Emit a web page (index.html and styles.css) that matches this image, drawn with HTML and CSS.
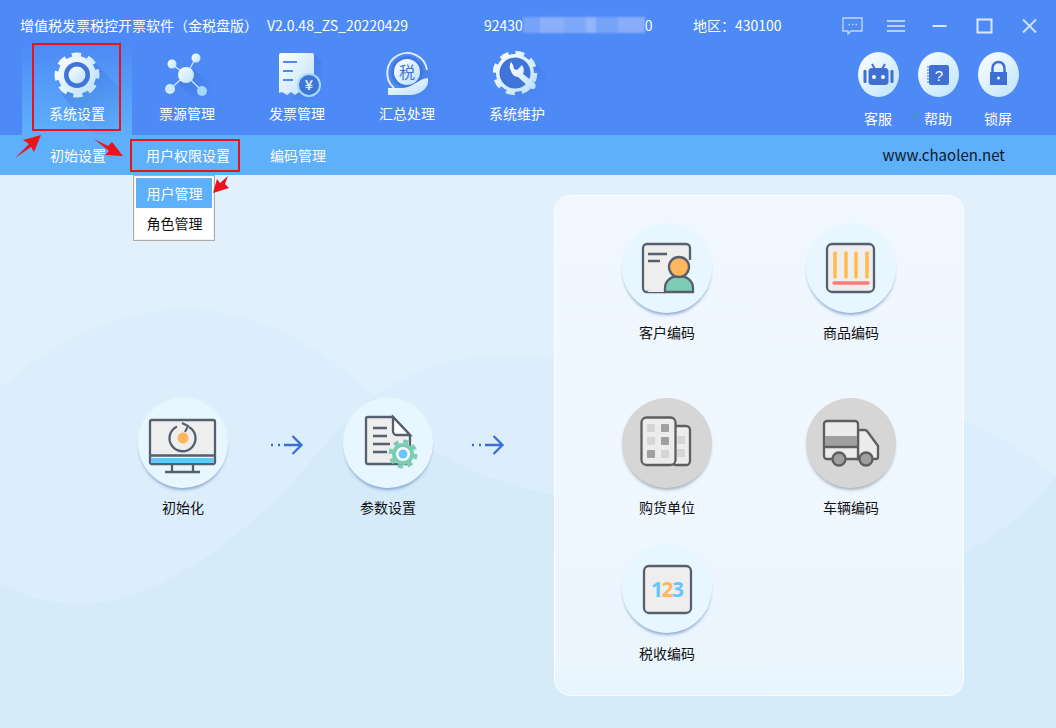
FILE: index.html
```html
<!DOCTYPE html>
<html lang="zh-CN">
<head>
<meta charset="utf-8">
<title>增值税发票税控开票软件</title>
<link rel="stylesheet" href="styles.css">
</head>
<body>
<div class="app">
  <svg class="defs" width="0" height="0">
    <defs>
      <linearGradient id="lt" x1="0" y1="0" x2="1" y2="1">
        <stop offset="0" stop-color="#ffffff"/><stop offset="1" stop-color="#b9e0fd"/>
      </linearGradient>
      <linearGradient id="sh" x1="0" y1="0" x2="1" y2="1">
        <stop offset="0" stop-color="#2f62c8" stop-opacity=".4"/><stop offset="1" stop-color="#2f62c8" stop-opacity="0"/>
      </linearGradient>
    </defs>
  </svg>

  <header class="topbar">
    <div class="titlerow">
      <span class="t-title">增值税发票税控开票软件（金税盘版）</span>
      <span class="t-ver">V2.0.48_ZS_20220429</span>
      <span class="t-id">92430<i class="mosaic"></i>0</span>
      <span class="t-area">地区：430100</span>
      <div class="winctl">
        <svg class="ctl" viewBox="0 0 22 20"><path d="M1.500 2h19v13H9.500l-3 3v-3h-5z" fill="none" stroke="#c3d8fb" stroke-width="1.300"/><path d="M7 8.500h1.500M10.500 8.500H12M14 8.500h1.500" stroke="#c3d8fb" stroke-width="1.500"/></svg>
        <svg class="ctl ctl-menu" viewBox="0 0 22 20"><path d="M2 5h18M2 10h18M2 15h18" stroke="#b9d1fa" stroke-width="1.800"/></svg>
        <svg class="ctl" viewBox="0 0 22 20"><path d="M4 10h14" stroke="#dbe8fd" stroke-width="2"/></svg>
        <svg class="ctl" viewBox="0 0 22 20"><rect x="4" y="3.500" width="14" height="13" fill="none" stroke="#dbe8fd" stroke-width="2"/></svg>
        <svg class="ctl" viewBox="0 0 22 20"><path d="M4.500 3.500l13 13M17.500 3.500l-13 13" stroke="#cfdffc" stroke-width="2"/></svg>
      </div>
    </div>
    <div class="toolrow">
      <nav class="tabs">
        <div class="tab tab-on">
          <svg class="tab-ico" viewBox="52 50 50 50">
            <path d="M90 58L120 88V135H95L62 95z" fill="url(#sh)"/>
            <circle cx="77" cy="75" r="19" fill="url(#lt)"/>
            <circle cx="77" cy="75" r="20" fill="none" stroke="url(#lt)" stroke-width="5" stroke-dasharray="9 6.700" transform="rotate(-16 77 75)"/>
            <circle cx="77" cy="75" r="13" fill="#3f74d8"/>
            <circle cx="77" cy="75" r="8.500" fill="url(#lt)"/>
          </svg>
          <span>系统设置</span>
        </div>
        <div class="tab">
          <svg class="tab-ico" viewBox="162 50 50 50">
            <path d="M192 68L212 84V100H194L178 84z" fill="url(#sh)"/>
            <path d="M186 75L196 58M186 75L172 64M186 75L170 89M186 75L202 91" stroke="#d6ecfd" stroke-width="1.200"/>
            <circle cx="186" cy="75" r="8" fill="url(#lt)"/>
            <circle cx="196" cy="58" r="4.500" fill="url(#lt)"/>
            <circle cx="172" cy="64" r="4.500" fill="url(#lt)"/>
            <circle cx="170" cy="89" r="5" fill="#cde9fe"/>
            <circle cx="202" cy="91" r="5" fill="#a6d8fd"/>
          </svg>
          <span>票源管理</span>
        </div>
        <div class="tab">
          <svg class="tab-ico" viewBox="272 50 50 50">
            <path d="M314 54L322 62V100H292z" fill="url(#sh)"/>
            <path d="M281 53h31a2 2 0 0 1 2 2v38l-3 1-4-2-4 3-4-3-4 3-4-3-4 3-5-3-3 1V55a2 2 0 0 1 2-2z" fill="url(#lt)"/>
            <path d="M283 62h14M283 71h10M283 80h10" stroke="#4e8af6" stroke-width="2"/>
            <circle cx="309" cy="85" r="11" fill="#3f74d8" stroke="#a8d9fd" stroke-width="2"/>
            <text x="309" y="90" class="svg-yen">¥</text>
          </svg>
          <span>发票管理</span>
        </div>
        <div class="tab">
          <svg class="tab-ico" viewBox="382 50 50 50">
            <path d="M420 60L432 72V100H400z" fill="url(#sh)"/>
            <path d="M394 88A20 20 0 1 1 427 70" fill="none" stroke="#e4f3fe" stroke-width="1.800"/>
            <circle cx="407" cy="72" r="16" fill="#3f74d8" opacity=".8"/>
            <circle cx="407" cy="72" r="13" fill="url(#lt)"/>
            <text x="407" y="78" class="svg-tax">税</text>
            <path d="M388 88h12c8 0 10-2 14-4s9-6 14-6v4c0 6-8 13-18 13h-22z" fill="url(#lt)"/>
          </svg>
          <span>汇总处理</span>
        </div>
        <div class="tab">
          <svg class="tab-ico" viewBox="492 50 50 50">
            <path d="M530 58L545 72V100H520L500 84z" fill="url(#sh)"/>
            <circle cx="515" cy="73" r="19" fill="url(#lt)"/>
            <circle cx="515" cy="73" r="20" fill="none" stroke="url(#lt)" stroke-width="4.500" stroke-dasharray="8.700 7"/>
            <circle cx="515" cy="73" r="15.500" fill="#3f74d8"/>
            <path d="M511 62a9 9 0 0 0 0 9 8 8 0 0 0 7 6l12 11c1.500 1.500 4 1.500 5 0s1-3.500-.5-5L523 74a9 9 0 0 0-1-9l-5 5-3-1-1-4z" fill="url(#lt)"/>
          </svg>
          <span>系统维护</span>
        </div>
      </nav>
      <div class="side">
        <div class="sidebtn">
          <div class="egg">
            <svg viewBox="0 0 41 45"><path d="M14 12l3 5M27 12l-3 5" stroke="#3f6fd2" stroke-width="2"/><rect x="10.500" y="16" width="20" height="17" rx="3.500" fill="#3f6fd2"/><rect x="5.500" y="18" width="3" height="13" rx="1" fill="#3f6fd2"/><rect x="32.500" y="18" width="3" height="13" rx="1" fill="#3f6fd2"/><circle cx="16" cy="25" r="2" fill="#fff"/><circle cx="25" cy="25" r="2" fill="#fff"/></svg>
          </div>
          <span>客服</span>
        </div>
        <div class="sidebtn">
          <div class="egg">
            <svg viewBox="0 0 41 45"><rect x="11" y="13" width="20" height="20" rx="2" fill="#3f6fd2"/><path d="M9 15h4M9 18h4M9 21h4M9 24h4M9 27h4M9 30h4" stroke="#3f6fd2" stroke-width="1.200"/><text x="21" y="29" class="svg-q">?</text></svg>
          </div>
          <span>帮助</span>
        </div>
        <div class="sidebtn">
          <div class="egg">
            <svg viewBox="0 0 41 45"><path d="M14.500 20v-4a6 6 0 0 1 12 0v4" fill="none" stroke="#3f6fd2" stroke-width="2.500"/><rect x="12" y="20" width="17" height="13" fill="#3f6fd2"/><circle cx="20.500" cy="26" r="1.500" fill="#fff"/></svg>
          </div>
          <span>锁屏</span>
        </div>
      </div>
    </div>
  </header>

  <div class="subnav">
    <span>初始设置</span>
    <span>用户权限设置</span>
    <span>编码管理</span>
    <span class="site">www.chaolen.net</span>
  </div>

  <main class="content">
    <svg class="waves" viewBox="0 0 1056 553" preserveAspectRatio="none">
      <path d="M0 212C60 163 120 134 186 134C260 134 320 173 375 220C410 195 450 182 489 182C600 182 750 193 860 205C940 225 1000 260 1056 300V553H0z" fill="#dceefb"/>
      <path d="M0 409C30 424 60 429 85 429C170 425 260 347 310 287C335 258 355 238 375 220C395 243 415 260 436 277C470 297 510 311 560 321C680 346 800 408 900 403C970 383 1025 345 1056 300V553H0z" fill="#d5ebfa"/>
    </svg>
    <section class="flow">
      <div class="node">
        <div class="disc">
          <svg viewBox="0 0 90 90">
            <rect x="12" y="22" width="65" height="44" rx="2" fill="#eee" stroke="#555f6e" stroke-width="2.300"/>
            <rect x="13" y="60" width="63" height="5" fill="#66c6ff"/>
            <path d="M12 57.500h65" stroke="#555f6e" stroke-width="2.300"/>
            <path d="M34 67v7M55 67v7M27 74h35" stroke="#555f6e" stroke-width="2.300"/>
            <path d="M51 29a13 13 0 1 1-12-.500" fill="none" stroke="#555f6e" stroke-width="2.300"/>
            <path d="M44 25l6 3-3 6" fill="none" stroke="#555f6e" stroke-width="2"/>
            <circle cx="45" cy="40" r="5.500" fill="#ffb65c"/>
          </svg>
        </div>
        <span class="lbl">初始化</span>
      </div>
      <div class="arrow arrow-a">
        <svg viewBox="0 0 36 22"><path d="M3 11h2M10 11h2M16 11h17M24.500 2l9 9-9 9" fill="none" stroke="#3b6fd6" stroke-width="2.300"/></svg>
      </div>
      <div class="node">
        <div class="disc">
          <svg viewBox="0 0 90 90">
            <path d="M25 19h25l17 18v27a2 2 0 0 1-2 2H25a2 2 0 0 1-2-2V21a2 2 0 0 1 2-2z" fill="#eee" stroke="#555f6e" stroke-width="2.300"/>
            <path d="M50 19l17 18H54a4 4 0 0 1-4-4z" fill="#fff" stroke="#555f6e" stroke-width="2.300"/>
            <path d="M30 30h14M30 38h14M30 46h17M30 54h14" stroke="#555f6e" stroke-width="2.300"/>
            <circle cx="60" cy="56" r="12.500" fill="none" stroke="#7dcdb5" stroke-width="4" stroke-dasharray="5 4.800"/>
            <circle cx="60" cy="56" r="11" fill="#7dcdb5"/>
            <circle cx="60" cy="56" r="7" fill="#fff"/>
            <circle cx="60" cy="56" r="4.500" fill="#66c6ff"/>
          </svg>
        </div>
        <span class="lbl">参数设置</span>
      </div>
      <div class="arrow arrow-b">
        <svg viewBox="0 0 36 22"><path d="M3 11h2M10 11h2M16 11h17M24.500 2l9 9-9 9" fill="none" stroke="#3b6fd6" stroke-width="2.300"/></svg>
      </div>
    </section>

    <section class="panel">
      <div class="node">
        <div class="disc">
          <svg viewBox="0 0 90 90">
            <path d="M43 69H25a4 4 0 0 1-4-4V25a4 4 0 0 1 4-4h39a4 4 0 0 1 4 4v12" fill="#eee" stroke="#555f6e" stroke-width="2.300"/>
            <path d="M68 37v9H43v23H25" fill="#eee"/>
            <path d="M26 31h19M26 38h12" stroke="#555f6e" stroke-width="2.300"/>
            <path d="M43 69v-4c0-7 6-12 14-12s14 5 14 12v4z" fill="#7dcdb5" stroke="#555f6e" stroke-width="2.300"/>
            <circle cx="57" cy="44" r="10" fill="#ffb65c" stroke="#555f6e" stroke-width="2.300"/>
          </svg>
        </div>
        <span class="lbl">客户编码</span>
      </div>
      <div class="node">
        <div class="disc">
          <svg viewBox="0 0 90 90">
            <rect x="21" y="21" width="47" height="48" rx="5" fill="#eee" stroke="#555f6e" stroke-width="2.300"/>
            <path d="M29 30v24M40 30v24M50 30v24M61 30v24" stroke="#ffbc4d" stroke-width="3.500" stroke-linecap="round"/>
            <path d="M28 60h34" stroke="#ff7b7b" stroke-width="3.500" stroke-linecap="round"/>
          </svg>
        </div>
        <span class="lbl">商品编码</span>
      </div>
      <div class="node">
        <div class="disc disc-off">
          <svg viewBox="0 0 90 90">
            <rect x="50" y="28" width="18" height="39" rx="4" fill="#ececec" stroke="#5e5e5e" stroke-width="2.300"/>
            <rect x="19.500" y="19.500" width="34" height="47.500" rx="5" fill="#ececec" stroke="#5e5e5e" stroke-width="2.300"/>
            <rect x="25" y="26" width="8" height="8" rx="1" fill="#d5d5d5"/>
            <rect x="39" y="26" width="8" height="8" rx="1" fill="#a0a0a0"/>
            <rect x="25" y="39" width="8" height="8" rx="1" fill="#d5d5d5"/>
            <rect x="39" y="39" width="8" height="8" rx="1" fill="#a0a0a0"/>
            <rect x="25" y="52" width="8" height="8" rx="1" fill="#a0a0a0"/>
            <rect x="39" y="52" width="8" height="8" rx="1" fill="#d5d5d5"/>
            <rect x="55" y="38" width="8" height="8" rx="1" fill="#d5d5d5"/>
            <rect x="55" y="51" width="8" height="8" rx="1" fill="#d5d5d5"/>
          </svg>
        </div>
        <span class="lbl">购货单位</span>
      </div>
      <div class="node">
        <div class="disc disc-off">
          <svg viewBox="0 0 90 90">
            <path d="M52 32h7l2 1 11 15v11a2 2 0 0 1-2 2H52z" fill="#ececec" stroke="#5e5e5e" stroke-width="2.300"/>
            <path d="M21 23h28a3 3 0 0 1 3 3v35H21a3 3 0 0 1-3-3V26a3 3 0 0 1 3-3z" fill="#ececec" stroke="#5e5e5e" stroke-width="2.300"/>
            <rect x="19" y="38" width="32" height="11" fill="#a0a0a0"/>
            <path d="M18 49h34" stroke="#5e5e5e" stroke-width="2.300"/>
            <circle cx="33" cy="61" r="6.500" fill="#a0a0a0" stroke="#5e5e5e" stroke-width="2.300"/>
            <circle cx="60" cy="61" r="6.500" fill="#a0a0a0" stroke="#5e5e5e" stroke-width="2.300"/>
          </svg>
        </div>
        <span class="lbl">车辆编码</span>
      </div>
      <div class="node node-last">
        <div class="disc">
          <svg viewBox="0 0 90 90">
            <rect x="22" y="23" width="47" height="47" rx="5" fill="#eee" stroke="#555f6e" stroke-width="2.300"/>
            <text x="35" y="54" class="svg-num n-blue">1</text>
            <text x="45.500" y="54" class="svg-num n-orange">2</text>
            <text x="56" y="54" class="svg-num n-blue">3</text>
          </svg>
        </div>
        <span class="lbl">税收编码</span>
      </div>
    </section>
  </main>

  <div class="dropdown">
    <div class="dd-item dd-on">用户管理</div>
    <div class="dd-item">角色管理</div>
  </div>

  <div class="mark mark-a"></div>
  <div class="mark mark-b"></div>
  <svg class="pointers" viewBox="0 0 1056 728">
    <path d="M41 135L23 140L29 144L15 158L31 147L34 152z" fill="#e9141c"/>
    <path d="M94 139L108 146L112 142L123 156L105 155L109 151z" fill="#e9141c"/>
    <path d="M213 193L217 179L220 183L228 176L225 184L229 188z" fill="#e9141c"/>
  </svg>
</div>
</body>
</html>
```
FILE: styles.css
```css
* { box-sizing: border-box; }
html, body { margin: 0; padding: 0; }
body { font-family: "Noto Sans CJK SC", "Liberation Sans", sans-serif; font-size: 14px; }
.app {
  position: relative;
  width: 1056px;
  height: 728px;
  display: flex;
  flex-direction: column;
  overflow: hidden;
}
.defs { position: absolute; }

/* top bar */
.topbar { height: 135px; background: #4e8af6; color: #fff; flex: none; }
.titlerow { height: 45px; padding: 4px 0 0 20px; display: flex; align-items: center; line-height: 20px; }
.t-title { width: 247px; flex: none; }
.t-ver { width: 217px; flex: none; }
.t-id { width: 209px; flex: none; display: flex; align-items: center; }
.t-area { flex: none; }
.mosaic {
  display: inline-block;
  width: 122px;
  height: 16px;
  filter: blur(1px);
  background: linear-gradient(90deg, #75a3f8 0 14%, #8bb0fb 14% 34%, #7da8f9 34% 52%, #92b6fb 52% 60%, #74a3f8 60% 78%, #88aefa 78% 100%);
}
.winctl { margin: 2px 0 0 auto; padding-right: 4px; display: flex; }
.ctl { width: 45px; height: 20px; }
.ctl-menu { width: 42px; }

.toolrow { height: 90px; display: flex; justify-content: space-between; }
.tabs { padding-left: 22px; display: flex; }
.tab {
  width: 110px;
  padding-top: 5px;
  display: flex;
  flex-direction: column;
  align-items: center;
  line-height: 20px;
  overflow: hidden;
}
.tab-on { background: linear-gradient(180deg, #4e8af6 0%, #5eb0fb 100%); }
.tab-ico { width: 50px; height: 50px; overflow: visible; margin-bottom: 3px; flex: none; }
.side { display: flex; padding: 7px 28px 0 0; }
.sidebtn { width: 60px; display: flex; flex-direction: column; align-items: center; line-height: 20px; }
.egg {
  width: 41px;
  height: 45px;
  border-radius: 50%;
  background: linear-gradient(135deg, #ffffff 0%, #bce2fe 100%);
  margin-bottom: 11px;
}
.egg svg { display: block; width: 41px; height: 45px; }
.svg-yen { font-size: 14px; font-weight: 700; fill: #d8eefe; text-anchor: middle; }
.svg-tax { font-size: 16px; fill: #3f74d8; text-anchor: middle; }
.svg-q { font-family: "Liberation Sans", sans-serif; font-size: 15px; fill: #fff; text-anchor: middle; }
.svg-num { font-family: "Open Sans", sans-serif; font-size: 21px; font-weight: 700; text-anchor: middle; }
.n-blue { fill: #66c6ff; }
.n-orange { fill: #ffb65c; }

/* sub nav */
.subnav {
  height: 40px;
  flex: none;
  background: #5eb0fb;
  color: #fff;
  display: flex;
  align-items: center;
  gap: 40px;
  padding: 0 51px 0 50px;
  line-height: 20px;
}
.site { margin-left: auto; color: #0c1a2b; font-size: 15px; }

/* content */
.content {
  position: relative;
  flex: 1;
  display: flex;
  background: #e1f0fb;
}
.waves { position: absolute; inset: 0; width: 100%; height: 100%; }
.flow {
  position: relative;
  width: 554px;
  flex: none;
  padding: 223px 0 0 138px;
  display: flex;
  align-items: flex-start;
}
.panel {
  position: relative;
  width: 410px;
  height: 501px;
  margin-top: 20px;
  padding: 27px 0 0 20px;
  border: 1px solid #fbfdff;
  border-radius: 16px;
  background: linear-gradient(180deg, #f0f7ff 0%, #eef6fe 70%, #e9f5fe 100%);
  display: grid;
  grid-template-columns: 184px 184px;
  grid-template-rows: 175px 145px 1fr;
  justify-content: start;
}
.node { display: flex; flex-direction: column; align-items: center; }
.disc {
  width: 90px;
  height: 90px;
  flex: none;
  border-radius: 50%;
  background: #e8f7ff;
  box-shadow: 0 3px 3px -1px rgba(80, 120, 180, .6), 0 0 4px rgba(255, 255, 255, .35);
}
.disc svg { display: block; width: 90px; height: 90px; }
.disc-off { background: #d6d6d6; box-shadow: 0 3px 3px -1px rgba(110, 120, 130, .55), 0 0 4px rgba(255, 255, 255, .3); }
.lbl { margin-top: 9px; line-height: 20px; color: #111; white-space: nowrap; }
.node-last .lbl { margin-top: 10px; }
.arrow { height: 90px; display: flex; align-items: center; justify-content: center; }
.arrow svg { width: 36px; height: 22px; margin-top: 4px; }
.arrow-a { width: 115px; }
.arrow-b { width: 108px; }

/* overlays */
.dropdown {
  position: absolute;
  left: 133px;
  top: 175px;
  width: 82px;
  height: 66px;
  padding: 2px;
  background: #fff;
  border: 1px solid #ababab;
  box-shadow: inset 0 0 0 1px #f2f2f2;
}
.dd-item { height: 29px; line-height: 31px; padding-left: 1px; text-align: center; color: #111; }
.dd-on { height: 30px; line-height: 30px; background: #5eb0fb; color: #fff; }
.mark { position: absolute; border: 2px solid #e8141c; pointer-events: none; }
.mark-a { left: 32px; top: 43px; width: 89px; height: 88px; }
.mark-b { left: 130px; top: 139px; width: 110px; height: 33px; }
.pointers { position: absolute; left: 0; top: 0; width: 1056px; height: 728px; pointer-events: none; }
```
